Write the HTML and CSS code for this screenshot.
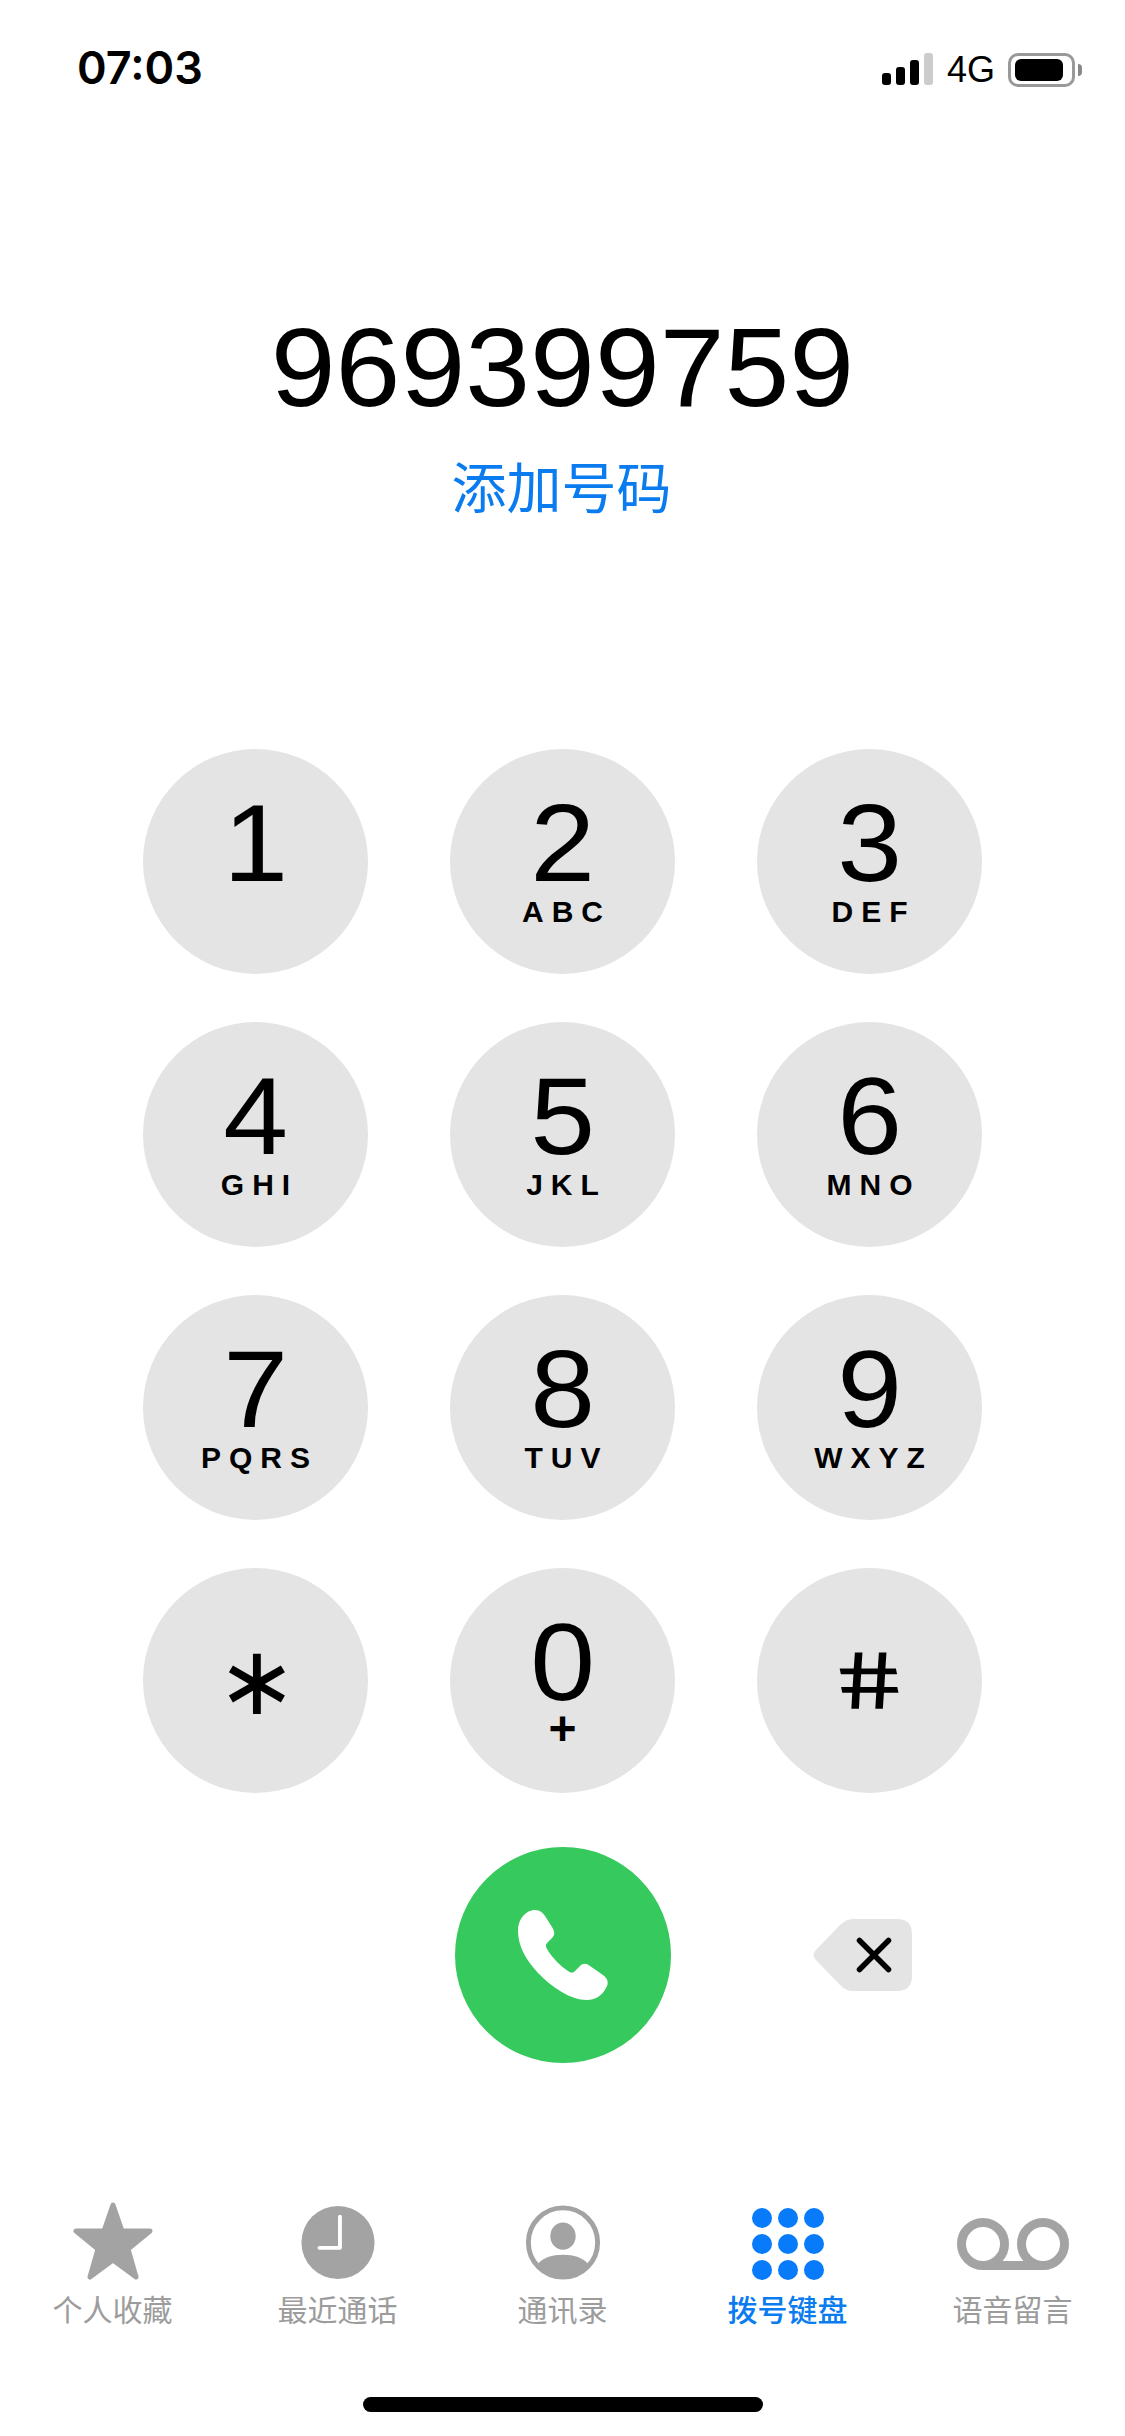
FILE: index.html
```html
<!DOCTYPE html>
<html lang="zh-CN">
<head>
  <meta charset="UTF-8" />
  <meta name="viewport" content="width=device-width, initial-scale=1.0"/>
  <title>拨号键盘</title>
  <link rel="stylesheet" href="styles.css">
</head>
<body>
  <div class="status">
    <span class="time">07:03</span>
    <div class="status-right">
      <div class="signal">
        <span class="bar bar1"></span>
        <span class="bar bar2"></span>
        <span class="bar bar3"></span>
        <span class="bar bar4"></span>
      </div>
      <span class="net">4G</span>
      <div class="battery"><span class="charge"></span></div>
      <span class="battery-cap"></span>
    </div>
  </div>

  <div class="dialed">969399759</div>
  <div class="add-number">添加号码</div>

  <div class="keypad">
    <div class="key"><span class="digit">1</span></div>
    <div class="key"><span class="digit">2</span><span class="letters">ABC</span></div>
    <div class="key"><span class="digit">3</span><span class="letters">DEF</span></div>
    <div class="key"><span class="digit">4</span><span class="letters">GHI</span></div>
    <div class="key"><span class="digit">5</span><span class="letters">JKL</span></div>
    <div class="key"><span class="digit">6</span><span class="letters">MNO</span></div>
    <div class="key"><span class="digit">7</span><span class="letters">PQRS</span></div>
    <div class="key"><span class="digit">8</span><span class="letters">TUV</span></div>
    <div class="key"><span class="digit">9</span><span class="letters">WXYZ</span></div>
    <div class="key key-symbol"><span class="star">∗</span></div>
    <div class="key"><span class="digit">0</span><span class="plus">+</span></div>
    <div class="key key-symbol"><span class="hash">#</span></div>
  </div>

  <div class="actions">
    <div class="call">
      <svg width="216" height="216" viewBox="0 0 216 216">
        <path fill="#fff" d="M80 63C85 63 88 66 90 69L97 80C100 85 100 88 97 91L92 96C90 98 91 100 92 102C97 111 107 120 113 124C116 126 118 126 120 124L125 119C128 116 131 116 135 119L148 128C153 132 154 136 151 141C147 149 140 153 132 153C115 153 97 140 83 126C71 113 63 99 63 84C63 72 71 63 80 63Z"/>
      </svg>
    </div>
    <svg class="backspace" width="99" height="72" viewBox="0 0 99 72">
      <path fill="#e4e4e4" d="M2 32L27 6Q33 0 40 0H84Q99 0 99 15V57Q99 72 84 72H40Q33 72 27 66L2 40Q-1 36 2 32Z"/>
      <path stroke="#000" stroke-width="5.5" stroke-linecap="round" fill="none" d="M46.500 21.500L75.500 50.500M75.500 21.500L46.500 50.500"/>
    </svg>
  </div>

  <div class="tabs">
    <div class="tab">
      <svg class="tab-icon" width="82" height="78" viewBox="0 0 82 78">
        <polygon fill="#a3a3a3" stroke="#a3a3a3" stroke-width="5" stroke-linejoin="round" points="41,3 50,29 78,29 56,47 64,75 41,58 18,75 26,47 4,29 32,29"/>
      </svg>
      <span class="tab-label">个人收藏</span>
    </div>
    <div class="tab">
      <svg class="tab-icon" width="76" height="80" viewBox="0 0 76 80">
        <circle cx="38" cy="41.500" r="37.500" fill="#a3a3a3"/>
        <path stroke="#fff" stroke-width="4" stroke-linecap="round" stroke-linejoin="round" fill="none" d="M40 15V47H19"/>
      </svg>
      <span class="tab-label">最近通话</span>
    </div>
    <div class="tab">
      <svg class="tab-icon" width="76" height="80" viewBox="0 0 76 80">
        <circle cx="38" cy="41.500" r="35.500" fill="none" stroke="#a3a3a3" stroke-width="5"/>
        <ellipse cx="38" cy="35" rx="13" ry="14" fill="#a3a3a3"/>
        <path fill="#a3a3a3" d="M12 64C17 57 27 54 38 54C49 54 59 57 64 64A34 34 0 0 1 38 76A34 34 0 0 1 12 64Z"/>
      </svg>
      <span class="tab-label">通讯录</span>
    </div>
    <div class="tab tab-active">
      <div class="tab-icon dots">
        <span></span><span></span><span></span>
        <span></span><span></span><span></span>
        <span></span><span></span><span></span>
      </div>
      <span class="tab-label">拨号键盘</span>
    </div>
    <div class="tab">
      <svg class="tab-icon" width="112" height="78" viewBox="0 0 112 78">
        <g fill="none" stroke="#a3a3a3" stroke-width="9">
          <circle cx="26" cy="42" r="21.500"/>
          <circle cx="86" cy="42" r="21.500"/>
          <path d="M26 63.500H86"/>
        </g>
      </svg>
      <span class="tab-label">语音留言</span>
    </div>
  </div>

  <div class="home-bar"></div>
</body>
</html>
```

FILE: styles.css
```css
* {
  box-sizing: border-box;
}

html, body {
  margin: 0;
  padding: 0;
}

body {
  width: 1125px;
  height: 2436px;
  overflow: hidden;
  background: #fff;
  color: #000;
  font-family: "Liberation Sans", "Noto Sans CJK SC", sans-serif;
}

/* status bar */
.status {
  height: 120px;
  padding: 44px 43px 0 77px;
  display: flex;
  justify-content: space-between;
  align-items: flex-start;
}

.time {
  font-family: Inter, sans-serif;
  font-size: 45px;
  font-weight: 600;
  line-height: 48px;
}

.status-right {
  display: flex;
  align-items: flex-start;
  margin-top: 9px;
}

.signal {
  display: flex;
  align-items: flex-end;
  gap: 5px;
  height: 32px;
}

.bar {
  width: 9px;
  background: #000;
  border-radius: 3px;
}

.bar1 { height: 12px; }
.bar2 { height: 18px; }
.bar3 { height: 25px; }
.bar4 { height: 32px; background: #ccc; }

.net {
  font-size: 36px;
  line-height: 34px;
  margin: 0 13px 0 14px;
  height: 32px;
}

.battery {
  width: 67px;
  height: 34px;
  border: 3px solid #999;
  border-radius: 10px;
  padding: 3px 9px 3px 4px;
}

.charge {
  display: block;
  width: 100%;
  height: 100%;
  background: #000;
  border-radius: 6px;
}

.battery-cap {
  width: 4px;
  height: 12px;
  margin: 11px 0 0 3px;
  background: #888;
  border-radius: 0 4px 4px 0;
}

/* dialed number */
.dialed {
  margin-top: 191px;
  text-align: center;
  font-size: 111px;
  line-height: 114px;
  transform: scaleX(1.05);
}

.add-number {
  margin-top: 29px;
  padding-right: 2px;
  text-align: center;
  font-size: 55px;
  line-height: 70px;
  color: #0a7cf0;
}

/* keypad */
.keypad {
  margin-top: 225px;
  display: grid;
  grid-template-columns: repeat(3, 225px);
  grid-auto-rows: 225px;
  gap: 48px 82px;
  justify-content: center;
}

.key {
  display: flex;
  flex-direction: column;
  align-items: center;
  padding-top: 39px;
  background: #e4e4e4;
  border-radius: 50%;
}

.digit {
  font-size: 110px;
  line-height: 110px;
  transform: scaleX(1.06);
}

.letters {
  font-size: 30px;
  font-weight: 700;
  line-height: 28px;
  letter-spacing: 8px;
  margin-right: -8px;
}

.plus {
  font-size: 48px;
  font-weight: 700;
  line-height: 24px;
}

.key-symbol {
  justify-content: center;
  padding-top: 0;
}

.star {
  font-family: "DejaVu Sans", sans-serif;
  font-size: 96px;
  line-height: 96px;
  margin-left: 3px;
}

/* the keypad # stands upright, so the slant of the font is undone here */
.hash {
  font-size: 80px;
  line-height: 80px;
  -webkit-text-stroke: 1.5px #000;
  transform: skewX(12deg) scaleX(1.3);
}

/* call + delete */
.actions {
  margin-top: 54px;
  display: grid;
  grid-template-columns: 216px 99px;
  gap: 142px;
  padding-left: 455px;
  align-items: center;
}

.call {
  width: 216px;
  height: 216px;
  background: #36c95d;
  border-radius: 50%;
}

.call svg {
  display: block;
}

/* tab bar */
.tabs {
  margin-top: 139px;
  display: grid;
  grid-template-columns: repeat(5, 225px);
}

.tab {
  display: flex;
  flex-direction: column;
  align-items: center;
}

.tab-icon {
  display: block;
  height: 78px;
}

.tab-label {
  margin-top: 13px;
  font-size: 30px;
  line-height: 36px;
  color: #9c9c9c;
}

.tab-active .tab-label {
  color: #0a7cf0;
  font-weight: 500;
}

.dots {
  display: grid;
  grid-template-columns: repeat(3, 20px);
  grid-auto-rows: 20px;
  gap: 6px;
  padding-top: 6px;
}

.dots span {
  background: #087bfa;
  border-radius: 50%;
}

.home-bar {
  width: 400px;
  height: 15px;
  margin: 68px auto 0;
  background: #000;
  border-radius: 8px;
}
```
